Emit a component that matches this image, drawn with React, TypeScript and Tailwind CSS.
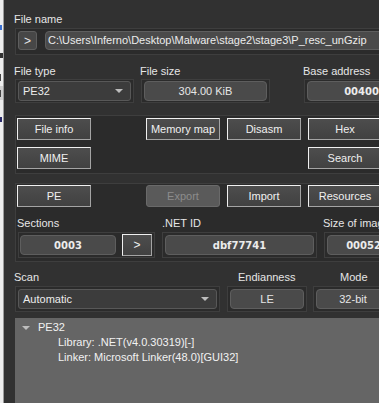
import React from "react";

const Label = ({ children, className = "" }: { children: React.ReactNode; className?: string }) => (
  <div className={`text-[11px] leading-[14px] text-[#e6e6e6] whitespace-nowrap ${className}`}>{children}</div>
);

const Frame = ({ children, className = "" }: { children?: React.ReactNode; className?: string }) => (
  <div className={`border border-[#3e3e3e] bg-[#2b2b2b] shrink-0 ${className}`}>{children}</div>
);

const Value = ({ children, className = "", bold = false }: { children: React.ReactNode; className?: string; bold?: boolean }) => (
  <div
    className={`h-[20px] rounded-[4px] border border-[#5e5e5e] bg-[#4a4a4a] flex items-center justify-center shrink-0 whitespace-nowrap overflow-hidden ${
      bold ? "font-['DejaVu_Sans',sans-serif] font-bold text-[10px] text-[#ececec]" : "text-[11px] text-[#e6e6e6]"
    } ${className}`}
  >
    {children}
  </div>
);

const Btn = ({ children, className = "" }: { children: React.ReactNode; className?: string }) => (
  <div
    className={`h-[22px] w-[74px] shrink-0 flex items-center justify-center border border-t-[#f0f0f0] border-l-[#f0f0f0] border-r-[#a4a4a4] border-b-[#a4a4a4] bg-gradient-to-b from-[#4d4d4d] to-[#414141] text-[11px] text-[#f0f0f0] whitespace-nowrap ${className}`}
  >
    {children}
  </div>
);

const Arrow = ({ className = "" }: { className?: string }) => (
  <div className={`w-0 h-0 border-l-[4px] border-r-[4px] border-t-[4px] border-l-transparent border-r-transparent border-t-[#bdbdbd] ${className}`} />
);

const Combo = ({ children, className = "" }: { children: React.ReactNode; className?: string }) => (
  <div
    className={`h-[20px] rounded-[3px] border border-[#585858] bg-[#3c3c3c] flex items-center pl-[4px] pr-[7px] shrink-0 text-[11px] text-[#ececec] ${className}`}
  >
    <span className="flex-1">{children}</span>
    <Arrow />
  </div>
);

export default function App() {
  return (
    <div className="w-[379px] h-[403px] overflow-hidden flex bg-[#313131] font-['Liberation_Sans',Arial,sans-serif] text-[11px]">
      {/* background window sliver */}
      <div className="w-[4px] h-full shrink-0 bg-[#ededed] border-r border-[#9c9c9c] relative">
        <div className="absolute left-0 top-[25px] w-[2px] h-[5px] bg-[#3a6fd0]" />
        <div className="absolute left-0 top-[53px] w-[3px] h-[5px] bg-[#333]" />
        <div className="absolute left-0 top-[74px] w-[1px] h-[7px] bg-[#444]" />
        <div className="absolute left-0 top-[86px] w-[3px] h-[14px] bg-[#cfcfcf]" />
        <div className="absolute left-0 top-[90px] w-[1px] h-[7px] bg-[#444]" />
        <div className="absolute left-0 top-[117px] w-[2px] h-[5px] bg-[#2a2a6a]" />
      </div>

      <div className="w-[375px] shrink-0 flex flex-col pl-[10px] overflow-hidden">
        {/* File name */}
        <Label className="mt-[12px]">File name</Label>
        <Frame className="mt-[2px] ml-[1px] w-[400px] h-[27px] flex items-start pt-[2px] pl-[2px]">
          <div className="w-[19px] h-[19px] rounded-[3px] border border-[#5e5e5e] bg-[#474747] flex items-center justify-center text-[12px] text-[#e6e6e6] shrink-0">
            &gt;
          </div>
          <div className="ml-[8px] h-[19px] w-[400px] rounded-[4px] border border-[#5e5e5e] bg-[#4a4a4a] flex items-center pl-[2px] text-[11px] text-[#ececec] whitespace-nowrap shrink-0">
            C:\Users\Inferno\Desktop\Malware\stage2\stage3\P_resc_unGzip
          </div>
        </Frame>

        {/* File type / size / base */}
        <div className="mt-[9px] flex">
          <Label className="w-[126px]">File type</Label>
          <Label className="w-[163px]">File size</Label>
          <Label>Base address</Label>
        </div>
        <div className="mt-[1px] ml-[1px] flex">
          <Frame className="w-[119px] h-[24px] flex items-center px-[2px]">
            <Combo className="w-[113px]">PE32</Combo>
          </Frame>
          <Frame className="ml-[7px] w-[129px] h-[24px] flex items-center px-[2px]">
            <Value className="w-[123px]">304.00 KiB</Value>
          </Frame>
          <Frame className="ml-[34px] w-[136px] h-[24px] flex items-center px-[2px]">
            <Value bold className="w-[130px]">00400000</Value>
          </Frame>
        </div>

        {/* tools group */}
        <Frame className="mt-[12px] ml-[1px] w-[400px] h-[59px] pt-[2px] pl-[1px] flex flex-col gap-[7px]">
          <div className="flex">
            <Btn>File info</Btn>
            <Btn className="ml-[55px]">Memory map</Btn>
            <Btn className="ml-[7px]">Disasm</Btn>
            <Btn className="ml-[7px]">Hex</Btn>
          </div>
          <div className="flex">
            <Btn>MIME</Btn>
            <Btn className="ml-[217px]">Search</Btn>
          </div>
        </Frame>

        {/* PE group */}
        <Frame className="mt-[9px] ml-[1px] w-[400px] h-[79px] pt-[1px] pl-[1px] flex flex-col">
          <div className="flex">
            <Btn>PE</Btn>
            <div className="ml-[55px] h-[22px] w-[74px] shrink-0 rounded-[3px] border border-[#6a6a6a] bg-[#5a5a5a] flex items-center justify-center text-[11px] text-[#8c8c8c]">
              Export
            </div>
            <Btn className="ml-[7px]">Import</Btn>
            <Btn className="ml-[7px]">Resources</Btn>
          </div>
          <div className="mt-[9px] flex">
            <Label className="w-[145px]">Sections</Label>
            <Label className="w-[161px]">.NET ID</Label>
            <Label>Size of image</Label>
          </div>
          <div className="mt-[2px] ml-[1px] flex">
            <Frame className="w-[137px] h-[26px] flex items-center pl-[1px]">
              <Value bold className="w-[96px]">0003</Value>
              <div className="ml-[6px] w-[30px] h-[22px] shrink-0 flex items-center justify-center border border-t-[#f0f0f0] border-l-[#f0f0f0] border-r-[#a4a4a4] border-b-[#a4a4a4] bg-gradient-to-b from-[#4d4d4d] to-[#414141] text-[12px] text-[#f0f0f0]">
                &gt;
              </div>
            </Frame>
            <Frame className="ml-[7px] w-[155px] h-[26px] flex items-center px-[2px]">
              <Value bold className="w-[149px]">dbf77741</Value>
            </Frame>
            <Frame className="ml-[7px] w-[100px] h-[26px] flex items-center px-[2px]">
              <Value bold className="w-[94px]">00052000</Value>
            </Frame>
          </div>
        </Frame>

        {/* Scan row */}
        <div className="mt-[8px] flex">
          <Label className="w-[224px]">Scan</Label>
          <Label className="w-[102px]">Endianness</Label>
          <Label>Mode</Label>
        </div>
        <div className="mt-[2px] ml-[1px] flex">
          <Frame className="w-[205px] h-[26px] flex items-center px-[2px]">
            <Combo className="w-[199px]">Automatic</Combo>
          </Frame>
          <Frame className="ml-[7px] w-[80px] h-[26px] flex items-center px-[2px]">
            <Value className="w-[74px]">LE</Value>
          </Frame>
          <Frame className="ml-[6px] w-[80px] h-[26px] flex items-center px-[2px]">
            <Value className="w-[74px]">32-bit</Value>
          </Frame>
        </div>

        {/* tree */}
        <div className="mt-[6px] ml-[1px] flex-1 w-[400px] bg-[#656565] pt-[2px] text-[11px] leading-[15px] text-[#f2f2f2]">
          <div className="flex items-center">
            <Arrow className="ml-[7px]" />
            <span className="ml-[8px]">PE32</span>
          </div>
          <div className="pl-[43px] whitespace-nowrap">Library: .NET(v4.0.30319)[-]</div>
          <div className="pl-[43px] whitespace-nowrap">Linker: Microsoft Linker(48.0)[GUI32]</div>
        </div>
      </div>
    </div>
  );
}
